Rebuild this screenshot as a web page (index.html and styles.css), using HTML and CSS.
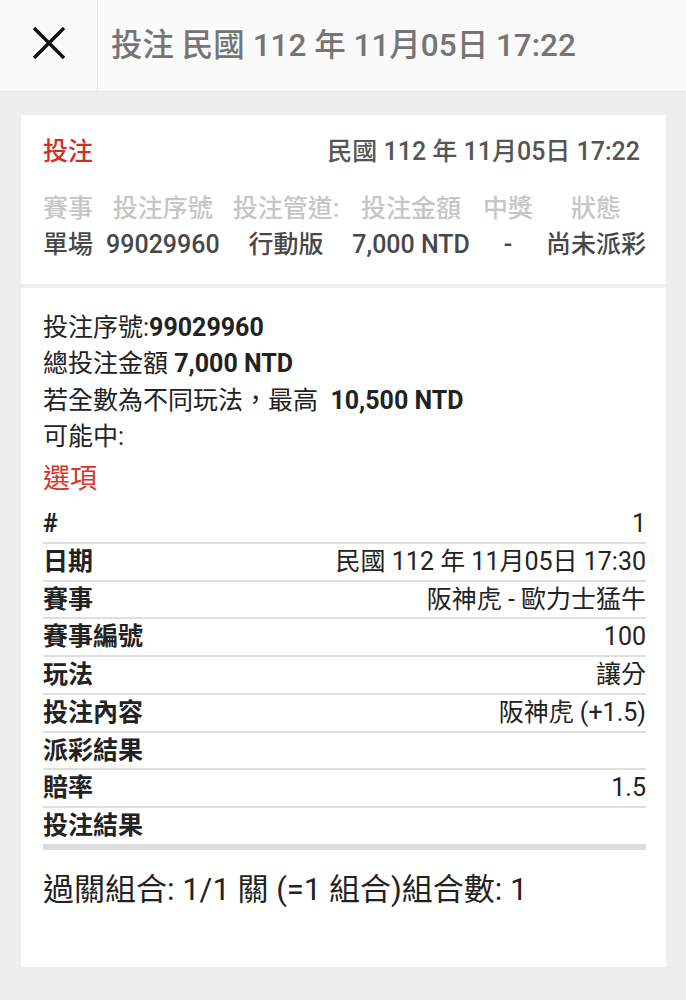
FILE: index.html
```html
<!DOCTYPE html>
<html>
<head>
  <meta charset="utf-8">
  <title>投注</title>
  <link rel="stylesheet" href="styles.css">
</head>
<body>
  <header class="topbar">
    <button class="close-btn" type="button">
      <svg width="34" height="34" viewBox="0 0 34 34">
        <path d="M2 2 L32 32 M32 2 L2 32" stroke="#111" stroke-width="3.4" fill="none"/>
      </svg>
    </button>
    <div class="topbar-title">投注 民國 112 年 11月05日 17:22</div>
  </header>

  <main class="content">
    <section class="card summary">
      <div class="summary-head">
        <span class="summary-label">投注</span>
        <span class="summary-date">民國 112 年 11月05日 17:22</span>
      </div>
      <div class="summary-cols">
        <div class="col"><span class="col-head">賽事</span><span class="col-val">單場</span></div>
        <div class="col"><span class="col-head">投注序號</span><span class="col-val">99029960</span></div>
        <div class="col"><span class="col-head">投注管道:</span><span class="col-val">行動版</span></div>
        <div class="col"><span class="col-head">投注金額</span><span class="col-val">7,000 NTD</span></div>
        <div class="col"><span class="col-head">中獎</span><span class="col-val">-</span></div>
        <div class="col"><span class="col-head">狀態</span><span class="col-val">尚未派彩</span></div>
      </div>
    </section>

    <section class="card detail">
      <p class="info">投注序號:<b>99029960</b></p>
      <p class="info">總投注金額 <b>7,000 NTD</b></p>
      <p class="info">若全數為不同玩法，最高&nbsp; <b>10,500 NTD</b></p>
      <p class="info">可能中:</p>

      <h2 class="section-title">選項</h2>

      <table class="options">
        <tr><th>#</th><td>1</td></tr>
        <tr><th>日期</th><td>民國 112 年 11月05日 17:30</td></tr>
        <tr><th>賽事</th><td>阪神虎 - 歐力士猛牛</td></tr>
        <tr><th>賽事編號</th><td>100</td></tr>
        <tr><th>玩法</th><td>讓分</td></tr>
        <tr><th>投注內容</th><td>阪神虎 (+1.5)</td></tr>
        <tr><th>派彩結果</th><td></td></tr>
        <tr><th>賠率</th><td>1.5</td></tr>
        <tr class="last"><th>投注結果</th><td></td></tr>
      </table>

      <p class="combo">過關組合: 1/1 關 (=1 組合)組合數: 1</p>
    </section>
  </main>
</body>
</html>
```

FILE: styles.css
```css
body {
  margin: 0;
  padding: 0;
  background-color: #eeeeee;
  font-family: Roboto, "Noto Sans CJK TC", sans-serif;
  color: #222;
}

.topbar {
  display: flex;
  align-items: center;
  height: 91px;
  background-color: #fafafa;
  border-bottom: 1px solid #e6e6e6;
}

.close-btn {
  width: 98px;
  height: 91px;
  border: none;
  border-right: 1px solid #e6e6e6;
  background: none;
  padding: 0 0 6px 0;
  display: flex;
  align-items: center;
  justify-content: center;
}

.topbar-title {
  padding-left: 13px;
  font-size: 31.5px;
  font-weight: 500;
  color: #757575;
  padding-bottom: 8px;
}

.content {
  padding: 23px 20px 0 21px;
}

.card {
  background-color: #fff;
  padding: 0 20px 0 22px;
}

.summary {
  padding-top: 18px;
  padding-bottom: 21px;
  margin-bottom: 4px;
}

.summary-head {
  display: flex;
  justify-content: space-between;
  line-height: 38px;
  font-size: 25px;
  font-weight: 500;
  margin-bottom: 20px;
  padding-right: 6px;
}

.summary-label {
  color: #d32f23;
}

.summary-date {
  color: #555;
}

.summary-cols {
  display: flex;
  justify-content: space-between;
  font-size: 25px;
  font-weight: 500;
  line-height: 36px;
}

.col {
  display: flex;
  flex-direction: column;
  align-items: center;
}

.col-head {
  color: #c6c6c6;
}

.col-val {
  color: #484848;
}

.detail {
  padding-top: 22px;
  padding-bottom: 56px;
}

.info {
  margin: 0;
  font-size: 25px;
  line-height: 36.3px;
}

.info b {
  font-weight: 700;
}

.section-title {
  margin: 6px 0 9px 0;
  font-size: 27px;
  font-weight: 400;
  line-height: 36px;
  color: #d9342b;
}

.options {
  width: 100%;
  border-collapse: collapse;
  font-size: 25px;
}

.options th,
.options td {
  padding: 0;
  height: 35.75px;
  line-height: 35.75px;
  border-bottom: 2px solid #dedede;
}

.options th {
  text-align: left;
  font-weight: 700;
}

.options td {
  text-align: right;
  color: #222;
}

.options .last th,
.options .last td {
  border-bottom: 6px solid #dcdcdc;
}

.combo {
  margin: 19px 0 0 0;
  font-size: 31px;
  line-height: 42px;
}
```
